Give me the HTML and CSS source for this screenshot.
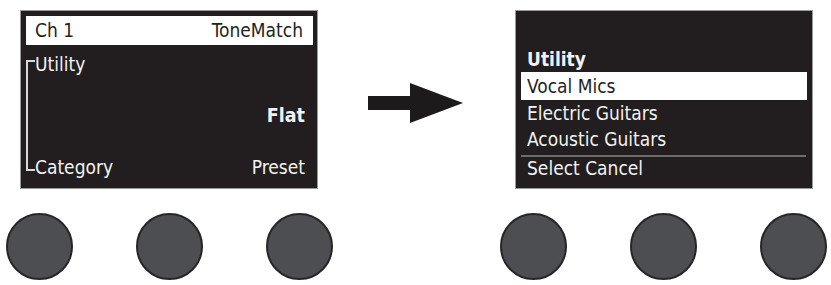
FILE: index.html
```html
<!DOCTYPE html>
<html>
<head>
<meta charset="utf-8">
<link rel="stylesheet" href="styles.css">
</head>
<body>
<div class="page">
  <div class="unit">
    <div class="screen screen-left">
      <div class="header"><span>Ch 1</span><span>ToneMatch</span></div>
      <div class="lbody">
        <div class="bracket"></div>
        <div class="lcontent">
          <div class="line">Utility</div>
          <div class="line flat">Flat</div>
          <div class="line split"><span>Category</span><span>Preset</span></div>
        </div>
      </div>
    </div>
    <div class="knobs">
      <div class="knob"></div>
      <div class="knob"></div>
      <div class="knob"></div>
    </div>
  </div>
  <div class="arrow">
    <svg width="95" height="40" viewBox="0 0 95 40">
      <rect x="0" y="13" width="44" height="14" fill="#1c1a1a"/>
      <polygon points="42,0 95,20 42,40" fill="#1c1a1a"/>
    </svg>
  </div>
  <div class="unit">
    <div class="screen screen-right">
      <div class="menu-title">Utility</div>
      <div class="menu-item selected">Vocal Mics</div>
      <div class="menu-item">Electric Guitars</div>
      <div class="menu-item">Acoustic Guitars</div>
      <div class="separator"></div>
      <div class="menu-foot">Select Cancel</div>
    </div>
    <div class="knobs">
      <div class="knob"></div>
      <div class="knob"></div>
      <div class="knob"></div>
    </div>
  </div>
</div>
</body>
</html>
```
FILE: styles.css
```css
html, body {
  margin: 0;
  padding: 0;
  background: #ffffff;
}
body {
  font-family: "DejaVu Sans Condensed", "DejaVu Sans", sans-serif;
  font-size: 19px;
  color: #f2f2f2;
}
.page {
  display: flex;
  align-items: flex-start;
  padding: 10px 0 0 6px;
}
.unit {
  width: 327px;
  display: flex;
  flex-direction: column;
}
.screen {
  box-sizing: border-box;
  width: 298px;
  height: 179px;
  margin-left: 14px;
  background: #221d1e;
  border: 1px solid #9a9a9a;
}
.screen-right {
  margin-left: 15px;
}
.header {
  display: flex;
  justify-content: space-between;
  height: 29px;
  margin: 5px 4px 0 5px;
  padding: 0 10px 0 9px;
  background: #ffffff;
  color: #231f20;
  line-height: 29px;
}
.lbody {
  display: flex;
  padding: 6px 12px 0 5px;
}
.bracket {
  box-sizing: border-box;
  width: 9px;
  height: 111px;
  margin-top: 9px;
  border: 2px solid #d8d8d8;
  border-right: none;
}
.lcontent {
  flex: 1;
  display: flex;
  flex-direction: column;
}
.line {
  height: 26px;
  line-height: 26px;
}
.flat {
  margin-top: 26px;
  text-align: right;
  font-weight: bold;
  font-size: 19.5px;
}
.split {
  margin-top: 25px;
  display: flex;
  justify-content: space-between;
}
.screen-right {
  padding: 36px 5px 0 5px;
}
.menu-title {
  padding-left: 6px;
  font-weight: bold;
  line-height: 25px;
}
.menu-item {
  padding-left: 6px;
  line-height: 26px;
}
.menu-item.selected {
  background: #ffffff;
  color: #231f20;
  line-height: 28px;
}
.separator {
  height: 2px;
  margin: 3px 1px 0 0;
  background: #6e6b6b;
}
.menu-foot {
  padding-left: 6px;
  line-height: 22px;
}
.knobs {
  display: flex;
  justify-content: space-between;
  margin-top: 24px;
}
.knob {
  box-sizing: border-box;
  width: 67px;
  height: 67px;
  border-radius: 50%;
  background: #4d4e51;
  border: 2px solid #262626;
}
.arrow {
  margin: 73px 37px 0 35px;
  height: 40px;
}
.arrow svg {
  display: block;
}
```
